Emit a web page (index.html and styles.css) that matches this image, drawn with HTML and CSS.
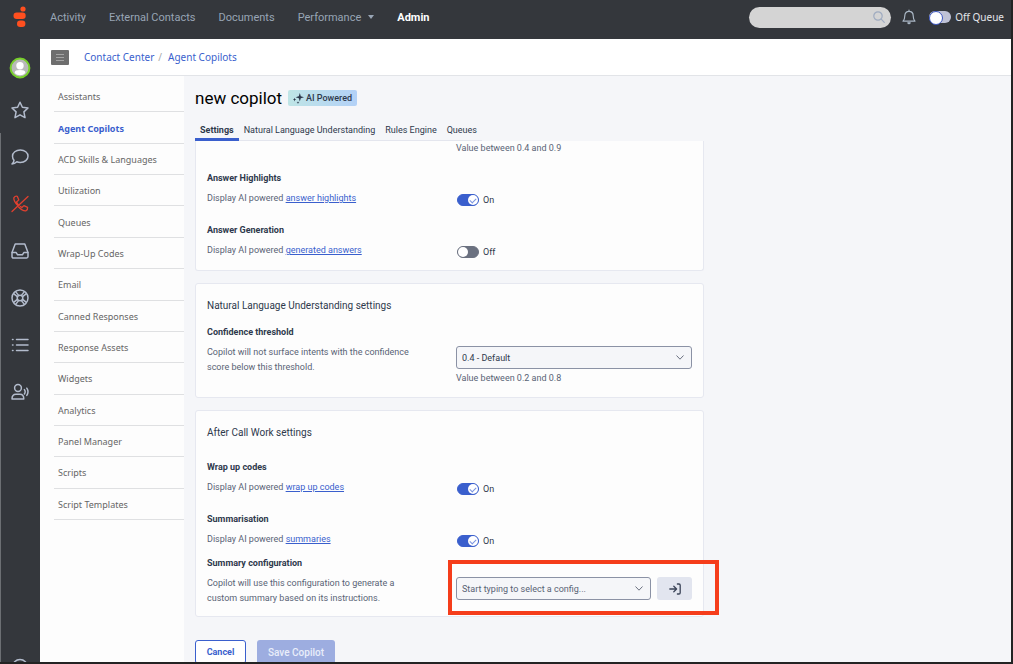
FILE: index.html
```html
<!DOCTYPE html>
<html lang="en">
<head>
    <meta charset="UTF-8">
    <meta name="viewport" content="width=device-width, initial-scale=1.0">
    <title>Agent Copilots</title>
    <link rel="stylesheet" href="styles.css">
</head>
<body>
    <header class="topbar">
        <a class="logo" href="#" aria-label="Home">
            <svg width="14" height="22" viewBox="0 0 14 22" fill="#ff4f1f">
                <circle cx="10" cy="3" r="2.6"/>
                <rect x="0.5" y="6.6" width="12.2" height="6.4" rx="3.2"/>
                <rect x="4" y="14.6" width="8.4" height="6.4" rx="3.2"/>
            </svg>
        </a>
        <nav class="topnav">
            <a href="#">Activity</a>
            <a href="#">External Contacts</a>
            <a href="#">Documents</a>
            <a href="#">Performance <span class="caret"></span></a>
            <a href="#" class="current">Admin</a>
        </nav>
        <div class="tools">
            <div class="search">
                <input type="text" aria-label="Search">
                <svg width="12" height="12" viewBox="0 0 12 12" fill="none" stroke="#9fabc0" stroke-width="1.2" stroke-linecap="round">
                    <circle cx="5" cy="5" r="4.2"/>
                    <path d="M8.2 8.2 L11.3 11.3"/>
                </svg>
            </div>
            <button class="bell" aria-label="Notifications">
                <svg width="14" height="16" viewBox="0 0 14 16" fill="none" stroke="#a9b6c4" stroke-width="1.2" stroke-linejoin="round" stroke-linecap="round">
                    <path d="M7 1 V2.2 M1 12.2 C2.6 10.8 2.8 9.4 2.8 6.8 C2.8 4 4.6 2.3 7 2.3 C9.4 2.3 11.2 4 11.2 6.8 C11.2 9.4 11.4 10.8 13 12.2 Z"/>
                    <path d="M5.8 13.8 C6.2 15 7.8 15 8.2 13.8 Z" fill="#a9b6c4"/>
                </svg>
            </button>
            <label class="queue"><input type="checkbox" class="queue-switch">Off Queue</label>
        </div>
    </header>

    <div class="shell">
        <nav class="rail">
            <a href="#" aria-label="Profile" class="avatar">
                <svg width="22" height="22" viewBox="0 0 22 22">
                    <circle cx="11" cy="11" r="9.4" fill="#b9b9b9" stroke="#77cf2a" stroke-width="2"/>
                    <circle cx="11" cy="8.8" r="3.7" fill="#fff"/>
                    <path d="M5.6 15.8 C5.6 13.6 7.6 13 11 13 C14.4 13 16.4 13.6 16.4 15.8 C15 17.6 13 18.3 11 18.3 C9 18.3 7 17.6 5.6 15.8 Z" fill="#fff"/>
                </svg>
            </a>
            <a href="#" aria-label="Favorites">
                <svg width="18" height="18" viewBox="0 0 18 18">
                    <path d="M9 1.2 L11.4 6.3 L17 7 L12.9 10.9 L14 16.6 L9 13.8 L4 16.6 L5.1 10.9 L1 7 L6.6 6.3 Z"/>
                </svg>
            </a>
            <a href="#" aria-label="Chat">
                <svg width="18" height="18" viewBox="0 0 18 18">
                    <path d="M9.3 2 C13.7 2 17 4.7 17 8.2 C17 11.7 13.7 14.4 9.3 14.4 C8 14.4 6.9 14.2 5.8 13.7 C4.6 14.8 3 15.8 1 16 C2 15 2.8 13.8 3 12.3 C2 11.2 1.5 9.8 1.5 8.2 C1.5 4.7 4.9 2 9.3 2 Z"/>
                </svg>
            </a>
            <a href="#" aria-label="Calls" class="alert">
                <svg width="18" height="18" viewBox="0 0 18 18">
                    <path d="M17 1.5 L1 16.5"/>
                    <path d="M6.6 10.4 C4.2 7.8 2.6 5 2.8 2.8 C3.6 1.6 5 1 6.3 1.3 L7.8 4.9 L5.6 7 C6 8 6.8 9.3 8 10.4"/>
                    <path d="M7.6 12 C10 14.6 12.8 16 15 15.8 C16.2 15 16.8 13.6 16.6 12.4 L12.9 10.6 L10.9 12.5 L9.4 11.4"/>
                </svg>
            </a>
            <a href="#" aria-label="Inbox">
                <svg width="18" height="18" viewBox="0 0 18 18">
                    <path d="M4.2 2 H13.8 L17 10.4 V14.6 C17 15.6 16.4 16 15.6 16 H2.4 C1.6 16 1 15.6 1 14.6 V10.4 Z"/>
                    <path d="M1.2 10.6 H5.2 L6.6 12.8 H11.4 L12.8 10.6 H16.8"/>
                </svg>
            </a>
            <a href="#" aria-label="Help">
                <svg width="18" height="18" viewBox="0 0 18 18">
                    <circle cx="9" cy="9" r="8"/>
                    <circle cx="9" cy="9" r="2.8"/>
                    <path d="M2.6 4.6 L6.4 7.6 M4.6 2.6 L7.6 6.4 M15.4 4.6 L11.6 7.6 M13.4 2.6 L10.4 6.4 M2.6 13.4 L6.4 10.4 M4.6 15.4 L7.6 11.6 M15.4 13.4 L11.6 10.4 M13.4 15.4 L10.4 11.6"/>
                </svg>
            </a>
            <a href="#" aria-label="Lists">
                <svg width="18" height="18" viewBox="0 0 18 18">
                    <path d="M5.5 3.5 H17 M5.5 9 H17 M5.5 14.5 H17 M1.5 3.5 H2 M1.5 9 H2 M1.5 14.5 H2"/>
                </svg>
            </a>
            <a href="#" aria-label="Voice">
                <svg width="18" height="18" viewBox="0 0 18 18">
                    <circle cx="7" cy="5" r="3.4"/>
                    <path d="M1 16 C1 12.6 3 11.2 5 11.2 H9 C11 11.2 12.8 12.6 12.8 16 Z"/>
                    <path d="M13.4 6.6 C14.4 8 14.4 9.6 13.4 11 M15.8 5.2 C17.4 7.6 17.4 10 15.8 12.4"/>
                </svg>
            </a>
            <a href="#" aria-label="More" class="rail-last">
                <svg width="18" height="18" viewBox="0 0 18 18">
                    <circle cx="9" cy="9" r="7.5"/>
                </svg>
            </a>
        </nav>

        <div class="page">
            <div class="crumbs">
                <button class="menu-btn" aria-label="Toggle menu">
                    <svg width="8" height="7" viewBox="0 0 8 7" stroke="#a4a4a4"><path d="M0 0.5 H8 M0 3.5 H8 M0 6.5 H8"/></svg>
                </button>
                <a href="#">Contact Center</a><span class="slash">/</span><a href="#">Agent Copilots</a>
            </div>
            <div class="columns">
                <ul class="sidebar">
                    <li><a href="#">Assistants</a></li>
                    <li><a href="#" class="selected">Agent Copilots</a></li>
                    <li><a href="#">ACD Skills &amp; Languages</a></li>
                    <li><a href="#">Utilization</a></li>
                    <li><a href="#">Queues</a></li>
                    <li><a href="#">Wrap-Up Codes</a></li>
                    <li><a href="#">Email</a></li>
                    <li><a href="#">Canned Responses</a></li>
                    <li><a href="#">Response Assets</a></li>
                    <li><a href="#">Widgets</a></li>
                    <li><a href="#">Analytics</a></li>
                    <li><a href="#">Panel Manager</a></li>
                    <li><a href="#">Scripts</a></li>
                    <li><a href="#">Script Templates</a></li>
                </ul>

                <main class="content">
                    <div class="title">
                        <h1>new copilot</h1>
                        <span class="badge">
                            <svg width="11" height="11" viewBox="0 0 11 11" fill="#2e394c">
                                <path d="M6.8 0 L7.8 3.2 L11 4.2 L7.8 5.2 L6.8 8.4 L5.8 5.2 L2.6 4.2 L5.8 3.2 Z"/>
                                <path d="M1.5 4.8 L2 6.1 L3.2 6.6 L2 7.1 L1.5 8.4 L1 7.1 L0 6.6 L1 6.1 Z"/>
                                <path d="M5 8.2 L5.4 9.2 L6.4 9.6 L5.4 10 L5 11 L4.6 10 L3.6 9.6 L4.6 9.2 Z"/>
                            </svg>
                            AI Powered
                        </span>
                    </div>
                    <nav class="tabs">
                        <a href="#" class="active">Settings</a>
                        <a href="#">Natural Language Understanding</a>
                        <a href="#">Rules Engine</a>
                        <a href="#">Queues</a>
                    </nav>

                    <div class="scroller">
                        <section class="card card-open">
                            <p class="hint">Value between 0.4 and 0.9</p>
                            <div class="row">
                                <div class="info">
                                    <h3>Answer Highlights</h3>
                                    <p>Display AI powered <a href="#">answer highlights</a></p>
                                </div>
                                <label class="toggle"><input type="checkbox" checked>On</label>
                            </div>
                            <div class="row">
                                <div class="info">
                                    <h3>Answer Generation</h3>
                                    <p>Display AI powered <a href="#">generated answers</a></p>
                                </div>
                                <label class="toggle"><input type="checkbox">Off</label>
                            </div>
                        </section>

                        <section class="card">
                            <h2>Natural Language Understanding settings</h2>
                            <div class="row">
                                <div class="info">
                                    <h3><label for="threshold">Confidence threshold</label></h3>
                                    <p>Copilot will not surface intents with the confidence score below this threshold.</p>
                                </div>
                                <div class="field">
                                    <div class="select">
                                        <select id="threshold"><option>0.4 - Default</option></select>
                                        <svg width="8" height="5" viewBox="0 0 8 5"><path d="M0.5 0.5 L4 4.2 L7.5 0.5"/></svg>
                                    </div>
                                    <p class="note">Value between 0.2 and 0.8</p>
                                </div>
                            </div>
                        </section>

                        <section class="card after-call">
                            <h2>After Call Work settings</h2>
                            <div class="row">
                                <div class="info">
                                    <h3>Wrap up codes</h3>
                                    <p>Display AI powered <a href="#">wrap up codes</a></p>
                                </div>
                                <label class="toggle"><input type="checkbox" checked>On</label>
                            </div>
                            <div class="row">
                                <div class="info">
                                    <h3>Summarisation</h3>
                                    <p>Display AI powered <a href="#">summaries</a></p>
                                </div>
                                <label class="toggle"><input type="checkbox" checked>On</label>
                            </div>
                            <div class="row config">
                                <div class="info">
                                    <h3><label for="config">Summary configuration</label></h3>
                                    <p>Copilot will use this configuration to generate a custom summary based on its instructions.</p>
                                </div>
                                <div class="field picker">
                                    <div class="select">
                                        <select id="config"><option>Start typing to select a config...</option></select>
                                        <svg width="8" height="5" viewBox="0 0 8 5"><path d="M0.5 0.5 L4 4.2 L7.5 0.5"/></svg>
                                    </div>
                                    <button class="open-btn" aria-label="Open configuration">
                                        <svg width="12" height="12" viewBox="0 0 12 12" fill="none" stroke="#3b4458" stroke-width="1.3" stroke-linecap="round" stroke-linejoin="round">
                                            <path d="M0.8 6 H7.4 M4.8 3.2 L7.6 6 L4.8 8.8 M8.4 1 H10 C10.8 1 11.2 1.4 11.2 2.2 V9.8 C11.2 10.6 10.8 11 10 11 H8.4"/>
                                        </svg>
                                    </button>
                                </div>
                                <div class="highlight"></div>
                            </div>
                        </section>

                        <div class="actions">
                            <button class="cancel">Cancel</button>
                            <button class="save">Save Copilot</button>
                        </div>
                    </div>
                </main>
            </div>
        </div>
    </div>
</body>
</html>
```
FILE: styles.css
```css
*{
    margin: 0;
    padding: 0;
    box-sizing: border-box;
}
body{
    height: 100vh;
    display: flex;
    flex-direction: column;
    overflow: hidden;
    background: #34373c;
    border-right: 2px solid #232323;
    border-bottom: 2px solid #232323;
    font-family: Roboto, "Liberation Sans", sans-serif;
    font-size: 9px;
    color: #2e394c;
}
a{
    text-decoration: none;
}
ul{
    list-style: none;
}
button, input, select{
    font-family: inherit;
    border: none;
}
svg{
    display: block;
    flex: none;
}

/* top bar */
.topbar{
    flex: none;
    height: 39px;
    padding-bottom: 5px;
    display: flex;
    align-items: center;
}
.logo{
    width: 40px;
    display: flex;
    justify-content: center;
}
.topnav{
    display: flex;
    gap: 23px;
    padding-left: 10px;
    font-size: 11px;
}
.topnav a{
    color: #98a5b5;
    display: flex;
    align-items: center;
}
.topnav .current{
    color: #fff;
    font-weight: bold;
}
.caret{
    margin-left: 7px;
    border: 3px solid transparent;
    border-top: 4px solid #98a5b5;
    border-bottom: none;
}
.tools{
    margin-left: auto;
    padding-right: 7px;
    display: flex;
    align-items: center;
}
.search{
    position: relative;
}
.search input{
    display: block;
    width: 142px;
    height: 21px;
    padding: 0 24px 0 10px;
    border-radius: 11px;
    background: #d4d4d4;
}
.search svg{
    position: absolute;
    right: 6px;
    top: 4px;
}
.bell{
    margin: 0 13px 0 11px;
    background: none;
}
.queue{
    display: flex;
    align-items: center;
    gap: 4px;
    color: #e4e6ea;
    font-family: "Noto Sans", sans-serif;
    font-size: 10px;
}
.queue-switch{
    appearance: none;
    width: 22px;
    height: 12px;
    border-radius: 6px;
    background: #bfc2d6;
}
.queue-switch::before{
    content: "";
    display: block;
    width: 12px;
    height: 12px;
    border: 1px solid #3b55c0;
    border-radius: 50%;
    background: #fff;
}

/* icon rail */
.shell{
    flex: 1;
    min-height: 0;
    display: flex;
}
.rail{
    position: relative;
    width: 40px;
    padding-top: 11px;
    display: flex;
    flex-direction: column;
}
.rail::before{
    content: "";
    position: absolute;
    left: 0;
    top: 94px;
    bottom: 0;
    width: 1px;
    background: #6c6f73;
}
.rail a{
    flex: none;
    height: 47px;
    display: flex;
    align-items: center;
    justify-content: center;
    fill: none;
    stroke: #b3bccd;
    stroke-width: 1.5;
    stroke-linejoin: round;
    stroke-linecap: round;
}
.rail .avatar{
    height: 36px;
    stroke: none;
}
.rail .alert{
    stroke: #e0402f;
    stroke-width: 1.3;
}
.rail .rail-last{
    margin-top: auto;
    margin-bottom: -28px;
}

/* page */
.page{
    flex: 1;
    min-width: 0;
    display: flex;
    flex-direction: column;
    background: #f5f6f9;
}
.crumbs{
    flex: none;
    height: 37px;
    padding-left: 11px;
    display: flex;
    align-items: center;
    background: #fff;
    border-bottom: 1px solid #e2e4e8;
    font-family: "Noto Sans", sans-serif;
    font-size: 10px;
}
.crumbs a{
    color: #3a5fcd;
}
.slash{
    margin: 0 6px 0 4px;
    color: #aaa;
}
.menu-btn{
    width: 18px;
    height: 15px;
    margin-right: 15px;
    border-radius: 1px;
    background: #6e6e6e;
    display: flex;
    align-items: center;
    justify-content: center;
}
.columns{
    flex: 1;
    min-height: 0;
    display: flex;
}
.sidebar{
    width: 144px;
    padding: 5px 0 0 14px;
    background: #fdfdfd;
    font-family: "Noto Sans", sans-serif;
    font-size: 9px;
    display: grid;
    grid-template-rows: repeat(14, 1fr) 142px;
}
.sidebar li{
    border-bottom: 1px solid #dfe0e2;
    padding: 1px 0 0 4px;
    display: flex;
    align-items: center;
}
.sidebar a{
    color: #666;
}
.sidebar .selected{
    color: #3a5fcd;
    font-weight: bold;
}
.content{
    flex: 1;
    min-width: 0;
    padding: 12px 12px 0 11px;
    display: flex;
    flex-direction: column;
}
.title{
    height: 20px;
    display: flex;
    align-items: center;
    gap: 6px;
}
h1{
    font-size: 17px;
    line-height: 20px;
    font-weight: normal;
    color: #000;
}
.badge{
    height: 16px;
    padding: 0 5px;
    border-radius: 2px;
    background: linear-gradient(90deg, #bfe5e6, #b3d1f7);
    display: flex;
    align-items: center;
    gap: 2px;
    font-weight: 500;
}
.tabs{
    align-self: flex-start;
    height: 27px;
    margin-top: 6px;
    border-bottom: 1px solid #e4e6ee;
    display: flex;
}
.tabs a{
    height: 27px;
    padding: 11px 5px 0;
    line-height: 10px;
    color: #2e394c;
}
.tabs .active{
    font-weight: bold;
    border-bottom: 3px solid #3a5fcd;
}
.scroller{
    flex: 1;
    min-height: 0;
    overflow-y: auto;
    scrollbar-width: none;
}

/* cards */
.card{
    max-width: 509px;
    margin-bottom: 12px;
    padding: 14px 11px 12px;
    background: #fdfdfd;
    border: 1px solid #e6e8f0;
    border-radius: 3px;
}
.card-open{
    padding-top: 0;
    border-top: none;
    border-radius: 0 0 3px 3px;
}
.after-call{
    margin-bottom: 23px;
    padding-bottom: 10px;
}
h2{
    margin-bottom: 10px;
    font-size: 10px;
    line-height: 16px;
    font-weight: normal;
}
.after-call h2{
    margin-bottom: 18px;
}
h3{
    margin-bottom: 5px;
    font-size: 9px;
    line-height: 16px;
}
.row{
    position: relative;
    display: grid;
    grid-template-columns: 249px 1fr;
}
.row + .row{
    margin-top: 16px;
}
.row + .config{
    margin-top: 8px;
}
.info p{
    max-width: 205px;
    line-height: 15px;
    color: #596375;
}
.info p a{
    color: #3a5fcd;
    text-decoration: underline;
}
.hint{
    margin: 0 0 15px 249px;
    line-height: 14px;
    color: #596375;
}
.note{
    margin-top: 2px;
    line-height: 14px;
    color: #596375;
}
.toggle{
    align-self: end;
    padding-left: 1px;
    display: flex;
    align-items: center;
    gap: 4px;
}
.toggle input{
    appearance: none;
    position: relative;
    width: 22px;
    height: 12px;
    border: 1px solid #6b7180;
    border-radius: 6px;
    background: #6b7180;
}
.toggle input::before{
    content: "";
    display: block;
    width: 10px;
    height: 10px;
    border-radius: 50%;
    background: #fff;
}
.toggle input:checked{
    border-color: #3a5fcd;
    background: #3a5fcd;
}
.toggle input:checked::before{
    margin-left: 10px;
}
/* check mark on the knob */
.toggle input:checked::after{
    content: "";
    position: absolute;
    right: 2px;
    top: 3px;
    width: 5px;
    height: 3px;
    border: 1px solid #7b95e0;
    border-top: none;
    border-right: none;
    transform: rotate(-45deg);
}
.field{
    margin-top: 22px;
}
.select{
    position: relative;
    flex: 1;
}
.select select{
    appearance: none;
    display: block;
    width: 100%;
    height: 23px;
    padding: 0 20px 0 5px;
    border: 1px solid #8b92a5;
    border-radius: 3px;
    background: #f5f6f9;
    color: #2e394c;
    font-size: 9px;
}
.select svg{
    position: absolute;
    right: 8px;
    top: 9px;
    fill: none;
    stroke: #6b7180;
}
.picker{
    display: flex;
    align-items: flex-start;
    gap: 6px;
}
.select #config{
    color: #596375;
}
.open-btn{
    width: 35px;
    height: 23px;
    border-radius: 3px;
    background: #e2e5ef;
    display: flex;
    align-items: center;
    justify-content: center;
}
.highlight{
    position: absolute;
    left: 241px;
    right: -27px;
    top: 5px;
    height: 55px;
    border: 4px solid #f53d1b;
    pointer-events: none;
}

.actions{
    display: flex;
    gap: 11px;
}
.actions button{
    height: 24px;
    border-radius: 3px;
}
.cancel{
    width: 51px;
    border: 1px solid #3a5fcd;
    background: #fff;
    color: #3a5fcd;
    font-size: 9px;
    font-weight: bold;
}
.save{
    width: 78px;
    background: #9dade0;
    color: #e9edfa;
    font-size: 10px;
    font-weight: 500;
}
```
